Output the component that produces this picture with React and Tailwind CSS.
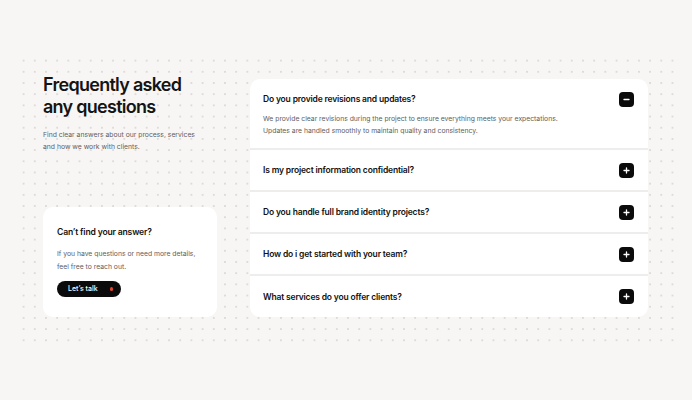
import React from "react";

const faqs = [
  "Is my project information confidential?",
  "Do you handle full brand identity projects?",
  "How do i get started with your team?",
  "What services do you offer clients?",
];

function IconBox({ minus }) {
  return (
    <div className="flex h-[15px] w-[15px] shrink-0 items-center justify-center rounded-[4px] bg-[#0b0b0b]">
      <svg width="7" height="7" viewBox="0 0 7 7" fill="none">
        <path d="M1 3.5H6" stroke="white" strokeWidth="1.3" strokeLinecap="round" />
        {!minus && <path d="M3.5 1V6" stroke="white" strokeWidth="1.3" strokeLinecap="round" />}
      </svg>
    </div>
  );
}

export default function App() {
  return (
    <div
      className="h-[400px] w-[692px] overflow-hidden bg-[#f8f6f5] pt-[55px] pl-[18px] text-[#111] antialiased"
      style={{ fontFamily: "Inter, 'Noto Sans', sans-serif" }}
    >
      <div className="h-[287px] w-[656px] bg-[radial-gradient(circle,#dedad8_0.9px,transparent_1.2px)] bg-[size:11.2px_11.2px] pt-[19px] pl-[25px]">
        <div className="flex items-start gap-[33px]">
          <div className="flex h-[243px] w-[174px] flex-col justify-between">
            <div>
              <h1 className="text-[18px] font-semibold leading-[22px] tracking-[-0.04em] text-[#141414]">
                Frequently asked
                <br />
                any questions
              </h1>
              <p className="mt-[11px] whitespace-nowrap text-[6.8px] leading-[12px] text-[#606060]">
                Find clear answers about our process, services
                <br />
                and how we work with clients.
              </p>
            </div>
            <div className="h-[110px] rounded-[10px] bg-white px-[14px] pt-[18px]">
              <h2 className="text-[8.6px] font-semibold leading-[14px] tracking-[-0.02em]">
                Can’t find your answer?
              </h2>
              <p className="mt-[7.5px] whitespace-nowrap text-[6.8px] leading-[13px] text-[#606060]">
                If you have questions or need more details,
                <br />
                feel free to reach out.
              </p>
              <button className="mt-[8.5px] flex h-[16px] w-[64px] items-center justify-between rounded-full bg-[#0b0b0b] pl-[11px] pr-[8px] text-[7px] font-medium text-white">
                <span>Let’s talk</span>
                <span className="h-[3.5px] w-[3.5px] rounded-full bg-[#e8452c]" />
              </button>
            </div>
          </div>

          <div className="mt-[5px] w-[398px] overflow-hidden rounded-[10px] bg-white">
            <div className="h-[69px] pl-[13px] pr-[14px] pt-[13px]">
              <div className="flex h-[14px] items-center justify-between">
                <span className="text-[8.5px] font-semibold leading-[14px] tracking-[-0.02em]">
                  Do you provide revisions and updates?
                </span>
                <IconBox minus />
              </div>
              <p className="mt-[7px] whitespace-nowrap text-[6.8px] leading-[12px] text-[#606060]">
                We provide clear revisions during the project to ensure everything meets your expectations.
                <br />
                Updates are handled smoothly to maintain quality and consistency.
              </p>
            </div>
            {faqs.map((q, i) => (
              <div
                key={q}
                className={`flex items-center justify-between border-t-2 border-[#efedec] pl-[13px] pr-[14px] ${
                  i === faqs.length - 1 ? "h-[43px]" : "h-[42px]"
                }`}
              >
                <span className="text-[8.5px] font-semibold leading-[14px] tracking-[-0.02em]">{q}</span>
                <IconBox />
              </div>
            ))}
          </div>
        </div>
      </div>
    </div>
  );
}
